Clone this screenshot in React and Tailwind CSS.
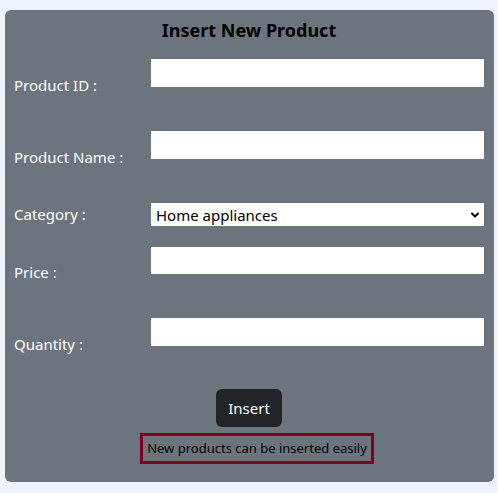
import { ChevronDown } from "lucide-react";

const font = { fontFamily: '"Noto Sans", "Open Sans", sans-serif' };

function Row({ label, height, labelTop, children }) {
  return (
    <div className="flex items-start" style={{ height }}>
      <label className="w-[137px] shrink-0 text-[15px] leading-5 text-white" style={{ marginTop: labelTop }}>
        {label}
      </label>
      <div className="flex-1">{children}</div>
    </div>
  );
}

export default function App() {
  return (
    <div className="min-h-screen bg-[#eef2fb] pt-[10px] pl-[5px]" style={font}>
      <div className="w-[489px] rounded-md bg-[#6c757d] pt-2 pb-[18px] pl-[9px] pr-[10px]">
        <h1 className="text-center text-[18px] font-bold leading-6 text-black">Insert New Product</h1>

        <div className="mt-[17px]">
          <Row label="Product ID :" height={72} labelTop={16}>
            <input type="text" className="block h-[28px] w-full bg-white outline-none" />
          </Row>
          <Row label="Product Name :" height={72} labelTop={16}>
            <input type="text" className="block h-[28px] w-full bg-white outline-none" />
          </Row>
          <Row label="Category :" height={44} labelTop={1}>
            <div className="relative h-[23px] w-full bg-white">
              <select
                className="h-full w-full appearance-none bg-transparent pl-[5px] text-[15px] leading-5 text-black outline-none"
                style={font}
                defaultValue="home"
              >
                <option value="home">Home appliances</option>
              </select>
              <ChevronDown className="pointer-events-none absolute right-[3px] top-[6px] h-[12px] w-[12px] text-black" strokeWidth={4} />
            </div>
          </Row>
          <Row label="Price :" height={71} labelTop={15}>
            <input type="text" className="block h-[27px] w-full bg-white outline-none" />
          </Row>
          <Row label="Quantity :" height={71} labelTop={16}>
            <input type="text" className="block h-[28px] w-full bg-white outline-none" />
          </Row>
        </div>

        <div className="flex flex-col items-center">
          <button className="h-[38px] w-[66px] rounded-md bg-[#212529] text-[15px] text-white">Insert</button>
          <div className="mt-[6px] ml-4 flex h-[31px] w-[234px] items-center justify-center border-[3px] border-[#800020] text-[13px] text-black">
            New products can be inserted easily
          </div>
        </div>
      </div>
    </div>
  );
}
